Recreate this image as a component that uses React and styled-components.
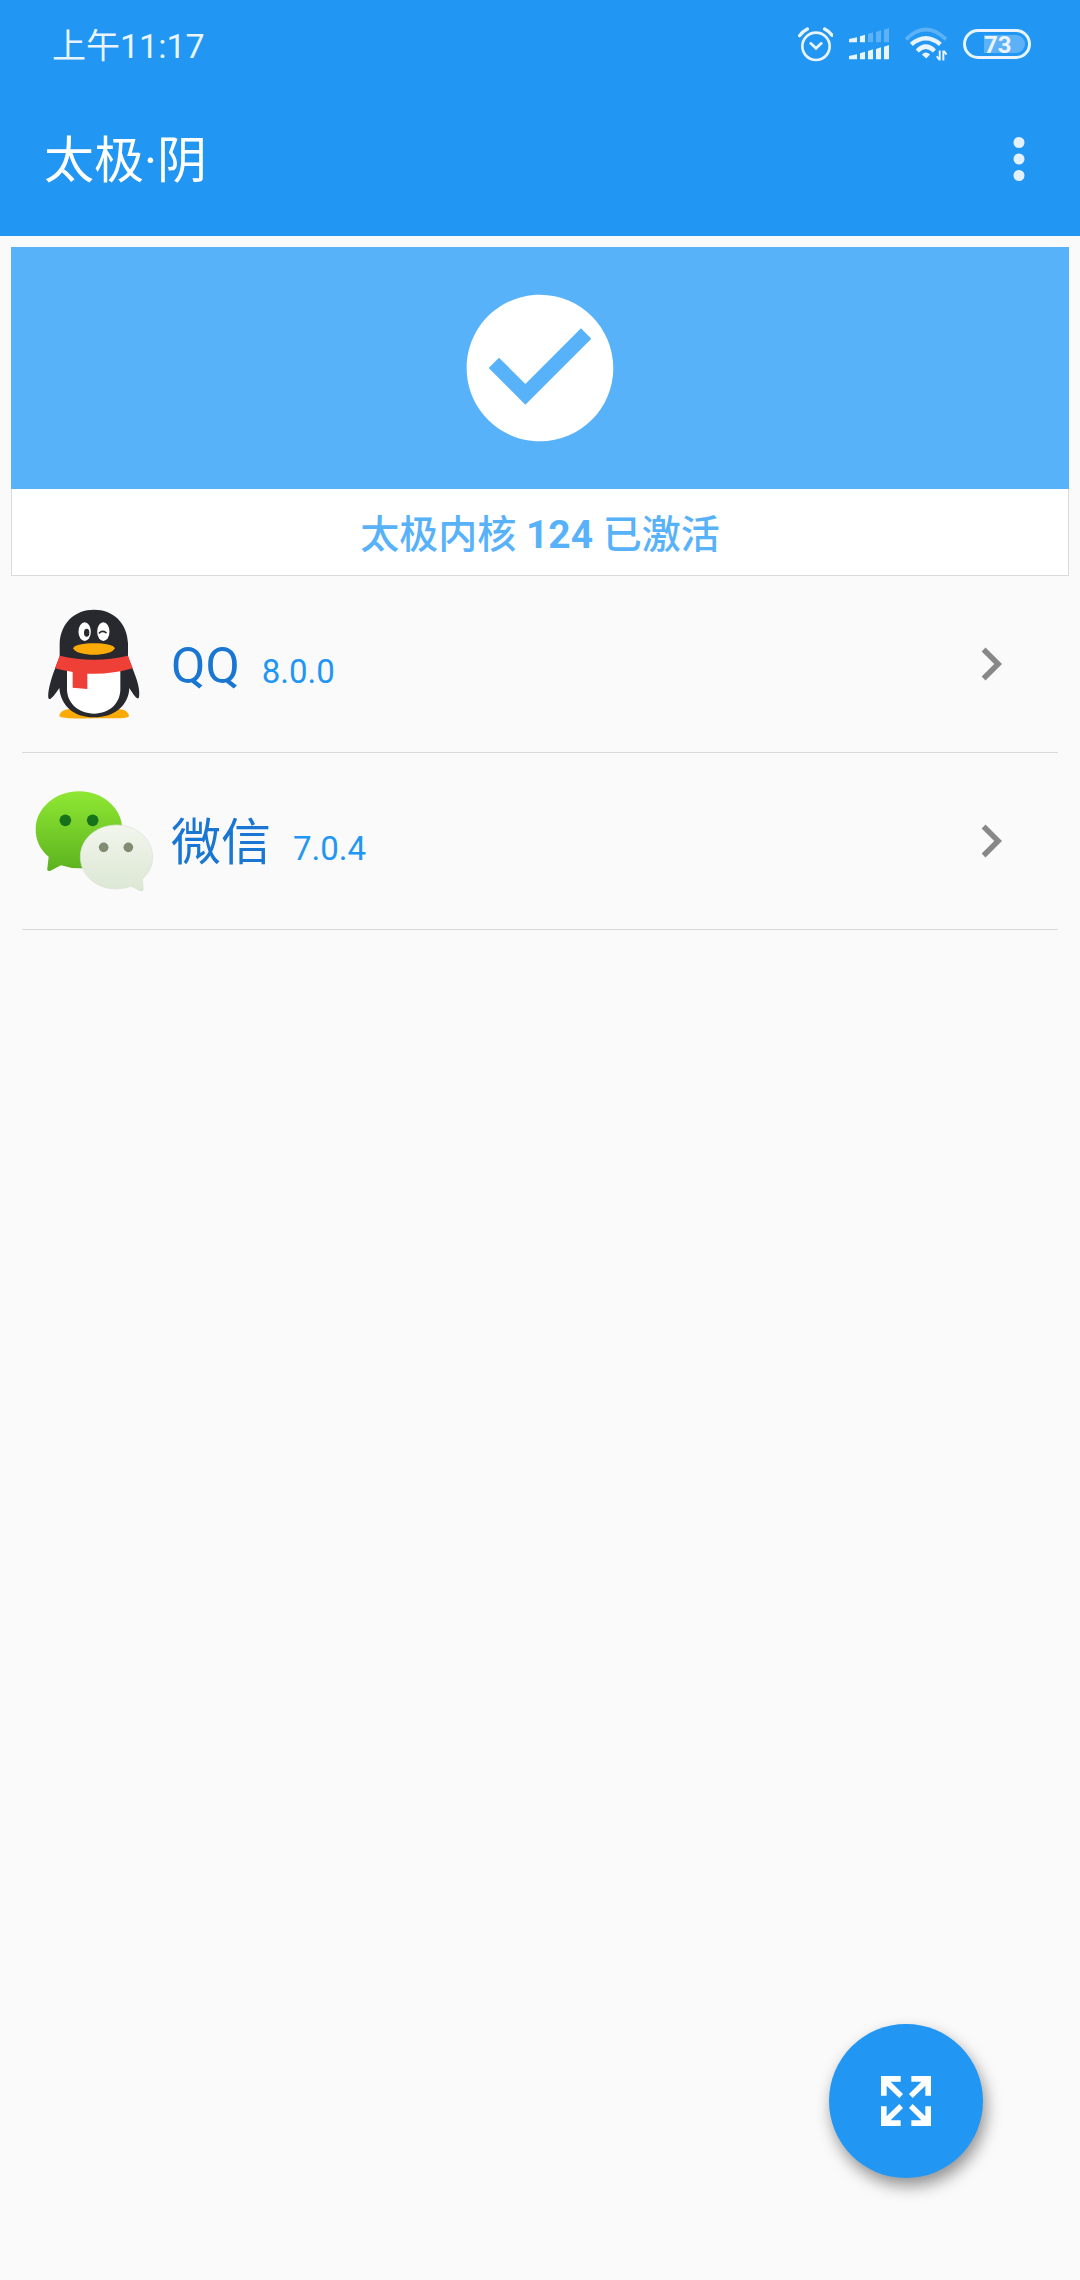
import React from 'react';
import styled, { createGlobalStyle } from 'styled-components';

const Global = createGlobalStyle`
  * { box-sizing: border-box; }
  body {
    margin: 0;
    background: #fafafa;
    font-family: Roboto, "Noto Sans CJK SC", sans-serif;
    -webkit-font-smoothing: antialiased;
  }
  svg { display: block; flex: none; }
`;

const Page = styled.div`
  display: flex;
  flex-direction: column;
  min-height: 100vh;
`;

const Header = styled.header`
  background: #2196f3;
  color: #fff;
`;

const StatusBar = styled.div`
  display: flex;
  align-items: center;
  justify-content: space-between;
  height: 82px;
  padding: 6px 49px 0 52px;
`;

const Clock = styled.time`
  padding-top: 4px;
  font-size: 34px;
  line-height: 40px;
  color: #e9f4fe;
`;

const StatusIcons = styled.div`
  display: flex;
  align-items: center;
  gap: 16px;
`;

const Battery = styled.div`
  display: flex;
  align-items: center;
  justify-content: flex-end;
  width: 68px;
  height: 30px;
  padding: 0 3px;
  border: 3px solid #e9f4fe;
  border-radius: 15px;
`;

const BatteryLevel = styled.span`
  width: 41px;
  height: 18px;
  border-radius: 0 9px 9px 0;
  background: #5db2f7;
  color: #e9f4fe;
  font-size: 24px;
  font-weight: 700;
  line-height: 20px;
`;

const AppBar = styled.div`
  display: flex;
  align-items: center;
  justify-content: space-between;
  height: 154px;
  padding: 0 28px 0 44px;
`;

const Title = styled.h1`
  margin: 0;
  padding-top: 4px;
  font-size: 50px;
  font-weight: 400;
  line-height: 60px;
`;

const IconButton = styled.button`
  padding: 0;
  border: 0;
  background: none;
  color: #e3f1fd;
  cursor: pointer;
`;

const Main = styled.main`
  padding: 11px;
`;

const Card = styled.section`
  border: 1px solid #dadada;
  border-top: 0;
  background: #fff;
  color: #58b2fa;
`;

const CardBanner = styled.div`
  display: flex;
  justify-content: center;
  margin: 0 -1px;
  padding: 33px;
  background: #58b2fa;
`;

const CardText = styled.p`
  margin: 0;
  padding: 19px 16px 13px;
  text-align: center;
  font-size: 39px;
  font-weight: 500;
  line-height: 54px;
`;

const CoreVersion = styled.strong`
  font-weight: 700;
`;

const AppList = styled.ul`
  margin: 0;
  padding: 0 11px;
  list-style: none;
`;

const AppItem = styled.li`
  border-bottom: 1px solid #dadada;
`;

const AppLink = styled.a`
  display: flex;
  align-items: center;
  height: 176px;
  padding: 0 34px 0 6px;
  color: #1976d2;
  text-decoration: none;
`;

const AppLabel = styled.span`
  display: flex;
  align-items: baseline;
  flex: 1;
  gap: 22px;
  padding: 4px 0 0 11px;
`;

const AppName = styled.span`
  font-size: 50px;
  line-height: 60px;
`;

const Version = styled.span`
  font-size: 33px;
  line-height: 40px;
  color: #2196f3;
`;

const Fab = styled.button`
  position: fixed;
  right: 97px;
  bottom: 102px;
  display: flex;
  align-items: center;
  justify-content: center;
  width: 154px;
  height: 154px;
  padding: 0;
  border: 0;
  border-radius: 50%;
  background: #2196f3;
  color: #fff;
  box-shadow: 3px 8px 16px rgba(0, 0, 0, 0.42);
  cursor: pointer;
`;

const AlarmIcon = () => (
  <svg width="35" height="35" viewBox="54 50 105 105" fill="none" stroke="#e9f4fe" aria-hidden="true">
    <circle cx="108" cy="108" r="41" strokeWidth="8" />
    <path d="M92 99l16 15 16-15" strokeWidth="8" strokeLinecap="round" />
    <path d="M59 76Q68 63 82 56M134 56Q148 63 156 75" strokeWidth="10" strokeLinecap="round" />
  </svg>
);

const bars = [
  { x: 207, top: 85, bottom: 137, on: true },
  { x: 240, top: 77, bottom: 129, on: true },
  { x: 264, top: 70, bottom: 122, on: false },
  { x: 288, top: 64, bottom: 116, on: false },
  { x: 312, top: 57, bottom: 109, on: false },
];

const SignalIcon = () => (
  <svg width="40" height="32" viewBox="207 56 120 96" fill="#e9f4fe" aria-hidden="true">
    {bars.map(({ x, top, bottom, on }, i) => {
      const w = i === 0 ? 24 : 15;
      return (
        <g key={x}>
          <path opacity={on ? 1 : 0.3} d={`M${x} ${top + 4}l${w} -5V99h-${w}z`} />
          <path d={`M${x} ${bottom + 3}l${w} -5V150h-${w}z`} />
        </g>
      );
    })}
  </svg>
);

const WifiIcon = () => (
  <svg width="42" height="34" viewBox="375 55 127 102" fill="none" stroke="#e9f4fe" aria-hidden="true">
    <path d="M378 92Q438 32 499 92" strokeWidth="11" opacity="0.3" />
    <path d="M394 107Q438 70 482 107" strokeWidth="13" />
    <path d="M412 127Q438 101 464 127" strokeWidth="13" />
    <path d="M426 138q12-13 25 0l-12 12z" fill="#e9f4fe" stroke="none" />
    <path d="M480 126v30M471 143l9 12M491 156v-30M501 138l-9-11" strokeWidth="6" />
  </svg>
);

const MoreIcon = () => (
  <svg width="66" height="66" viewBox="0 0 24 24" fill="currentColor" aria-hidden="true">
    <circle cx="12" cy="6" r="2" />
    <circle cx="12" cy="12" r="2" />
    <circle cx="12" cy="18" r="2" />
  </svg>
);

const CheckCircle = () => (
  <svg width="176" height="176" viewBox="0 0 24 24" fill="#fff" aria-hidden="true">
    <path d="M12 2C6.48 2 2 6.48 2 12s4.48 10 10 10 10-4.48 10-10S17.52 2 12 2zm-2 15l-5-5 1.41-1.41L10 14.17l7.59-7.59L19 8l-9 9z" />
  </svg>
);

const Chevron = () => (
  <svg width="66" height="66" viewBox="0 0 24 24" fill="#888" aria-hidden="true">
    <path d="M10 6L8.59 7.41 13.17 12l-4.58 4.59L10 18l6-6z" />
  </svg>
);

const ExpandIcon = () => {
  const arrow = 'M0 0H59V17H29L66 54L55 66L17 29V59H0Z';
  return (
    <svg width="50" height="50" viewBox="0 0 150 150" fill="currentColor" aria-hidden="true">
      <path d={arrow} />
      <path d={arrow} transform="matrix(-1 0 0 1 150 0)" />
      <path d={arrow} transform="matrix(1 0 0 -1 0 150)" />
      <path d={arrow} transform="matrix(-1 0 0 -1 150 150)" />
    </svg>
  );
};

const QQIcon = () => (
  <svg width="132" height="132" viewBox="24 24 396 396" aria-hidden="true">
    <path fill="#faab07" d="M118 377C120 362 140 354 170 358H275C305 354 325 362 327 377Q327 385 285 385H222Q118 387 118 377Z" />
    <path fill="#28282f" d="M119 200V160C122 98 165 59 222 59S322 98 324 160V200L338 236C352 270 361 300 357 322C354 331 345 322 328 294C326 345 285 382 222 382S122 345 118 294C99 322 90 331 86 326C81 314 91 270 106 234Z" />
    <path fill="#fff" d="M141 230H301V298C301 340 268 371 222 371S141 340 141 298Z" />
    <path fill="#ee4037" d="M119 197Q222 221 324 197L338 235Q275 254 202 251V297L158 293V246Q130 242 105 235Z" />
    <ellipse cx="194" cy="125" rx="18.500" ry="28" fill="#fff" />
    <ellipse cx="250" cy="125" rx="18.500" ry="28" fill="#fff" />
    <ellipse cx="200" cy="128" rx="8" ry="12" fill="#28282f" />
    <path d="M238 129Q247 120 258 128" fill="none" stroke="#28282f" strokeWidth="5" strokeLinecap="round" />
    <path fill="#faab07" d="M160 175C162 155 282 155 284 175C278 201 166 201 160 175Z" />
  </svg>
);

const WeChatIcon = () => (
  <svg width="132" height="132" viewBox="24 14 396 396" aria-hidden="true">
    <defs>
      <linearGradient id="green" x1="0" y1="0" x2="0" y2="1">
        <stop offset="0" stopColor="#8fe833" />
        <stop offset="1" stopColor="#5cb21f" />
      </linearGradient>
      <linearGradient id="pale" x1="0" y1="0" x2="0" y2="1">
        <stop offset="0" stopColor="#f2f6ed" />
        <stop offset="1" stopColor="#dce7d3" />
      </linearGradient>
    </defs>
    <path fill="url(#green)" d="M177 63C249 63 307 114 307 178S249 294 177 294Q150 294 123 285L90 302Q80 304 82 294L86 259C62 239 47 211 47 178C47 114 105 63 177 63Z" />
    <path fill="url(#pale)" stroke="#d9dfd6" strokeWidth="2" d="M289 164C349 164 398 206 398 260Q398 299 367 327L370 356Q370 364 360 361L334 348Q310 356 289 356C229 356 181 314 181 260S229 164 289 164Z" />
    <circle cx="136" cy="150" r="17.500" fill="#16731c" />
    <circle cx="218" cy="150" r="17.500" fill="#16731c" />
    <circle cx="251" cy="231" r="14.500" fill="#808d72" />
    <circle cx="325" cy="231" r="14.500" fill="#808d72" />
  </svg>
);

const apps = [
  { name: 'QQ', version: '8.0.0', Icon: QQIcon },
  { name: '微信', version: '7.0.4', Icon: WeChatIcon },
];

export default function App() {
  return (
    <Page>
      <Global />
      <Header>
        <StatusBar>
          <Clock>上午11:17</Clock>
          <StatusIcons>
            <AlarmIcon />
            <SignalIcon />
            <WifiIcon />
            <Battery>
              <BatteryLevel>73</BatteryLevel>
            </Battery>
          </StatusIcons>
        </StatusBar>
        <AppBar>
          <Title>太极·阴</Title>
          <IconButton type="button" aria-label="更多选项">
            <MoreIcon />
          </IconButton>
        </AppBar>
      </Header>
      <Main>
        <Card>
          <CardBanner>
            <CheckCircle />
          </CardBanner>
          <CardText>
            太极内核 <CoreVersion>124</CoreVersion> 已激活
          </CardText>
        </Card>
        <AppList>
          {apps.map(({ name, version, Icon }) => (
            <AppItem key={name}>
              <AppLink href="#">
                <Icon />
                <AppLabel>
                  <AppName>{name}</AppName>
                  <Version>{version}</Version>
                </AppLabel>
                <Chevron />
              </AppLink>
            </AppItem>
          ))}
        </AppList>
      </Main>
      <Fab type="button" aria-label="展开">
        <ExpandIcon />
      </Fab>
    </Page>
  );
}
